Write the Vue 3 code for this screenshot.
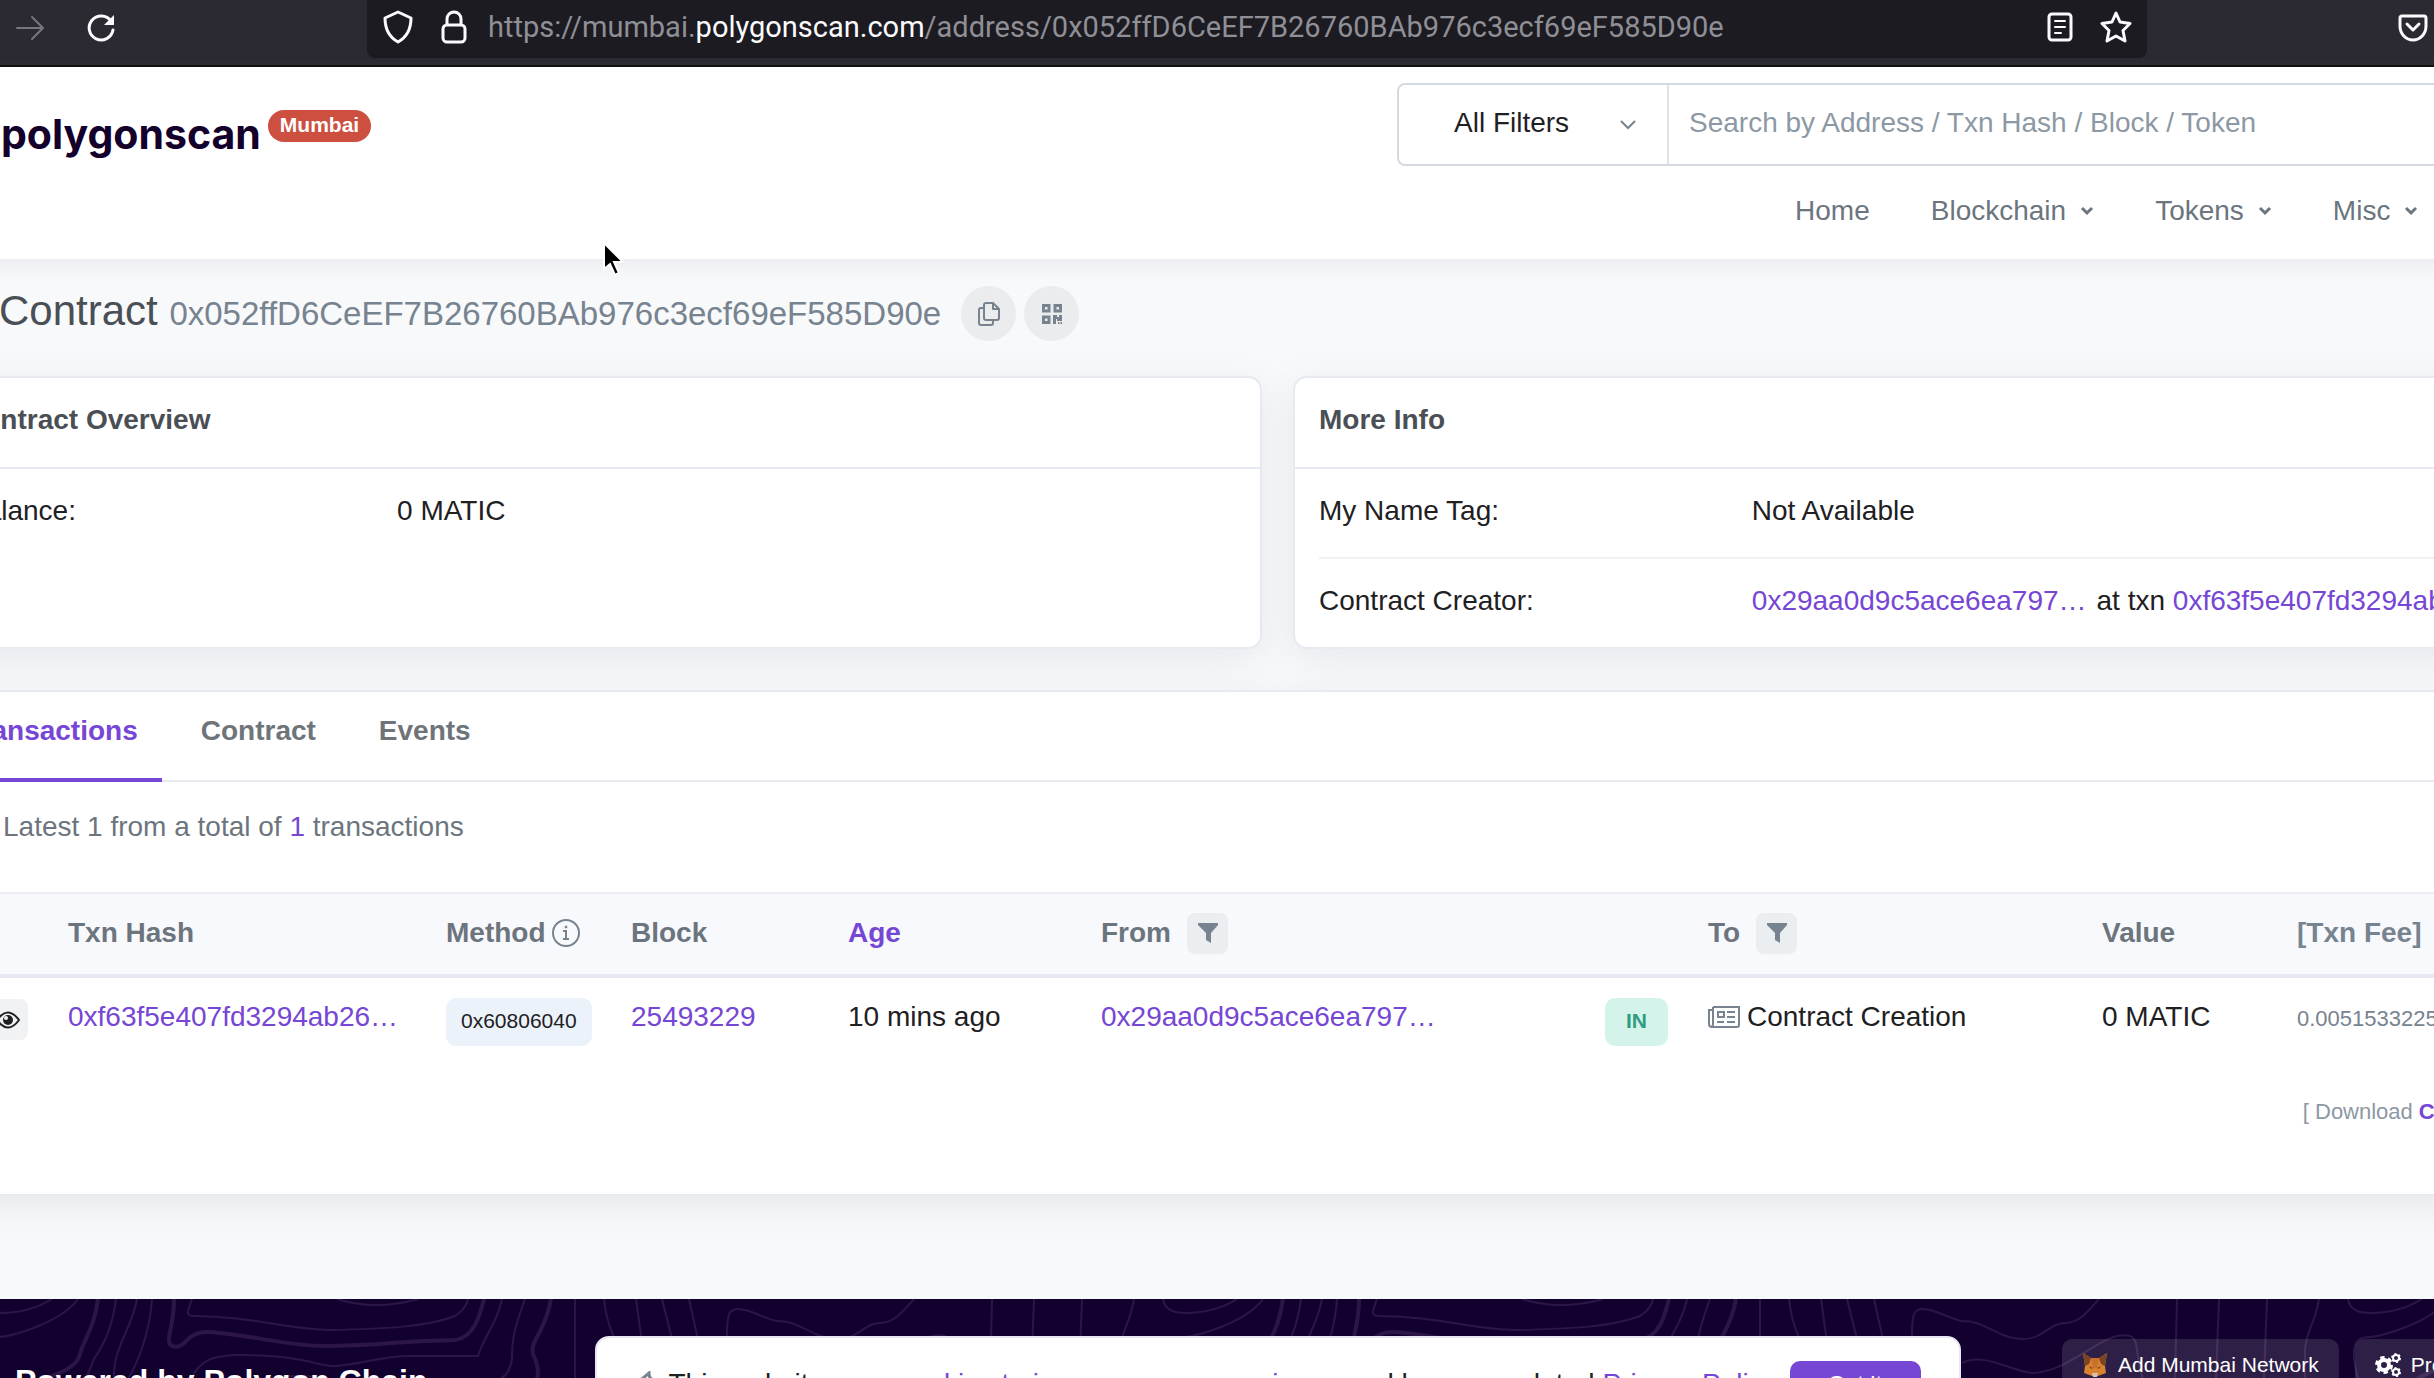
<script setup>
import { ref } from 'vue'

const menus = ['Blockchain', 'Tokens', 'Misc', 'Mumbai']
const tabs = ['Transactions', 'Contract', 'Events']
const activeTab = ref('Transactions')
const filter = ref('All Filters')
const query = ref('')
const address = '0x052ffD6CeEF7B26760BAb976c3ecf69eF585D90e'
const columnWidths = [89, 378, 185, 217, 253, 504, 103, 394, 195, 311]
</script>

<template>
  <div class="window">
    <div class="chrome">
      <div class="chrome-nav">
        <button class="icon-button" aria-label="Forward">
          <svg class="dim" width="30" height="28" viewBox="0 0 30 28" fill="none" stroke-width="2" stroke-linecap="round" stroke-linejoin="round"><path d="M1 14H27M16 3L27 14L16 25" /></svg>
        </button>
        <button class="icon-button" aria-label="Reload">
          <svg width="30" height="30" viewBox="0 0 30 30" fill="none" stroke-width="3" stroke-linecap="round"><path d="M25 8A12 12 0 1 0 27 17" /><path d="M28 2V12H18Z" fill="#fbfbfe" stroke="none" /></svg>
        </button>
      </div>
      <div class="url-bar">
        <svg width="30" height="34" viewBox="0 0 30 34" fill="none" stroke-width="3" stroke-linejoin="round"><path d="M15 2L28 8C28 20 24 27 15 32C6 27 2 20 2 8Z" /></svg>
        <svg class="lock" width="26" height="34" viewBox="0 0 26 34" fill="none" stroke-width="3"><rect x="2" y="15" width="22" height="17" rx="4" /><path d="M6 15V9A7 7 0 0 1 20 9V15" /></svg>
        <div class="url">https://mumbai.<span>polygonscan.com</span>/address/{{ address }}</div>
        <svg class="reader" width="26" height="30" viewBox="0 0 26 30" fill="none" stroke-width="3" stroke-linecap="round"><rect x="2" y="2" width="22" height="26" rx="3" /><path d="M8 9H18M8 15H18M8 21H14" stroke-width="2" /></svg>
        <svg width="34" height="32" viewBox="0 0 34 32" fill="none" stroke-width="3" stroke-linejoin="round"><path d="M17 2L21 11L31 12.500L24 19.500L26 30L17 25L8 30L10 19.500L3 12.500L13 11Z" /></svg>
      </div>
      <button class="icon-button pocket" aria-label="Save to Pocket">
        <svg width="30" height="28" viewBox="0 0 30 28" fill="none" stroke-width="3" stroke-linecap="round" stroke-linejoin="round"><path d="M4 2H26Q28 2 28 4V12C28 20 22 26 15 26C8 26 2 20 2 12V4Q2 2 4 2Z" /><path d="M9 10L15 16L21 10" /></svg>
      </button>
    </div>

    <div class="sheet">
      <header class="site-header">
        <a class="brand" href="#">polygonscan<span class="network">Mumbai</span></a>
        <div class="header-tools">
          <form class="search" @submit.prevent>
            <div class="filter">
              <select v-model="filter" aria-label="Filter">
                <option>All Filters</option>
                <option>Addresses</option>
                <option>Tokens</option>
              </select>
              <svg width="18" height="12" viewBox="0 0 18 12" fill="none" stroke="#77838f" stroke-width="2"><path d="M2 2L9 9L16 2" /></svg>
            </div>
            <input v-model="query" type="text" aria-label="Search" placeholder="Search by Address / Txn Hash / Block / Token">
          </form>
          <nav class="menu">
            <a href="#">Home</a>
            <button v-for="item in menus" :key="item">
              {{ item }}
              <svg v-if="item !== 'Mumbai'" width="14" height="10" viewBox="0 0 14 10" fill="none" stroke="#6c757d" stroke-width="3"><path d="M2 2L7 7L12 2" /></svg>
            </button>
          </nav>
        </div>
      </header>

      <main>
        <div class="title-row">
          <h1>Contract <small>{{ address }}</small></h1>
          <button class="round" aria-label="Copy address">
            <svg width="22" height="24" viewBox="0 0 22 24" fill="none" stroke="#77838f" stroke-width="2" stroke-linejoin="round"><path d="M8 1H15L21 7V16Q21 18 19 18H8Q6 18 6 16V3Q6 1 8 1Z" /><path d="M15 1V7H21M6 6H3Q1 6 1 8V21Q1 23 3 23H13Q15 23 15 21V18" /></svg>
          </button>
          <button class="round" aria-label="Show QR code">
            <svg width="22" height="22" viewBox="0 0 22 22" fill="none" stroke="#77838f" stroke-width="3"><path d="M2.500 2.500H8V8H2.500ZM14 2.500H19.500V8H14ZM2.500 14H8V19.500H2.500Z" /><path d="M12 12H16V14H18V12H21V18H16V16H15V21H12ZM17 19H18.500V21H17ZM19.500 19H21V21H19.500Z" fill="#77838f" stroke="none" /></svg>
          </button>
        </div>

        <div class="cards">
          <section class="card overview">
            <h2>Contract Overview</h2>
            <dl>
              <div class="info"><dt>Balance:</dt><dd>0 MATIC</dd></div>
            </dl>
          </section>
          <section class="card">
            <h2>More Info</h2>
            <dl>
              <div class="info"><dt>My Name Tag:</dt><dd>Not Available</dd></div>
              <div class="info">
                <dt>Contract Creator:</dt>
                <dd class="creator"><a href="#">0x29aa0d9c5ace6ea797…</a><span>at txn <a href="#">0xf63f5e407fd3294ab26…</a></span></dd>
              </div>
            </dl>
          </section>
        </div>

        <section class="card transactions">
          <div class="tabs" role="tablist">
            <button v-for="tab in tabs" :key="tab" role="tab" :aria-selected="tab === activeTab" :class="{ active: tab === activeTab }" @click="activeTab = tab">{{ tab }}</button>
          </div>
          <div class="panel">
            <p class="summary">Latest 1 from a total of <a href="#">1</a> transactions</p>
            <table>
              <colgroup><col v-for="(w, i) in columnWidths" :key="i" :style="{ width: w + 'px' }"></colgroup>
              <thead>
                <tr>
                  <th></th>
                  <th>Txn Hash</th>
                  <th><div class="head">Method <svg width="28" height="28" viewBox="0 0 28 28" fill="none" stroke="#77838f" stroke-width="2"><circle cx="14" cy="14" r="13" /><path d="M11 12H14V20M11 20H17" /><circle cx="14" cy="8" r="1" fill="#77838f" stroke-width="1" /></svg></div></th>
                  <th>Block</th>
                  <th><a href="#">Age</a></th>
                  <th><div class="head wide">From <button class="square" aria-label="Filter by sender"><svg width="22" height="22" viewBox="0 0 22 22" fill="#77838f"><path d="M1 1H21V3L14 11V21L9 18V11L1 3Z" /></svg></button></div></th>
                  <th></th>
                  <th><div class="head wide">To <button class="square" aria-label="Filter by recipient"><svg width="22" height="22" viewBox="0 0 22 22" fill="#77838f"><path d="M1 1H21V3L14 11V21L9 18V11L1 3Z" /></svg></button></div></th>
                  <th>Value</th>
                  <th class="muted">[Txn Fee]</th>
                </tr>
              </thead>
              <tbody>
                <tr>
                  <td class="preview"><button class="square" aria-label="Preview transaction"><svg width="24" height="18" viewBox="0 0 24 18" fill="none" stroke="#1e2022" stroke-width="2"><path d="M1 9Q12 -6 23 9Q12 24 1 9Z" /><circle cx="12" cy="9" r="5" fill="#1e2022" stroke="none" /><circle cx="10" cy="7" r="2" fill="#f1f2f3" stroke="none" /></svg></button></td>
                  <td><a href="#">0xf63f5e407fd3294ab26…</a></td>
                  <td class="tagged"><span class="tag">0x60806040</span></td>
                  <td><a href="#">25493229</a></td>
                  <td>10 mins ago</td>
                  <td><a href="#">0x29aa0d9c5ace6ea797…</a></td>
                  <td class="tagged"><span class="tag in">IN</span></td>
                  <td><div class="creation"><svg width="32" height="22" viewBox="0 0 32 22" fill="none" stroke="#77838f" stroke-width="2"><path d="M5 1H31V19Q31 21 29 21H4Q1 21 1 18V4H5M5 1V18Q5 21 3 21" /><path d="M10 6H16V11H10ZM19 6H27M19 11H27M9 16H16M19 16H27" /></svg>Contract Creation</div></td>
                  <td>0 MATIC</td>
                  <td class="fee">0.005153322500</td>
                </tr>
              </tbody>
            </table>
            <p class="download">[ Download <a href="#">CSV Export</a> <svg width="22" height="20" viewBox="0 0 22 20" fill="none" stroke="#8c98a4" stroke-width="2"><path d="M11 1V13M6 8L11 13L16 8M1 13V19H21V13" /></svg> ]</p>
          </div>
        </section>
      </main>

      <footer>
        <svg class="contours" width="100%" height="100%" aria-hidden="true">
          <pattern id="contour" x="63" width="1185" height="300" patternUnits="userSpaceOnUse">
            <g fill="none" stroke="#2b1647" stroke-width="2">
              <path d="M0 14Q30 14 52 0M1163 0C1165 12 1175 14 1185 14M0 38C10 37 60 25 78 0M116 0C112 30 104 45 94 60L86 80M137 0C132 30 112 50 114 80M152 0C150 30 140 60 128 80" />
              <path d="M192 0C188 12 184 17 195 17C250 17 290 31 330 31C390 30 430 27 455 17Q466 10 468 0M337 0Q375 12 418 0" />
              <path d="M191 80C200 60 215 57 235 56C300 55 320 68 335 67C360 66 380 57 410 57L478 57C485 35 497 25 502 0M262 80Q300 74 330 80" />
              <path d="M525 0C512 35 512 45 512 60Q510 75 500 80M575 0V80M604 0Q606 20 613 36L617 80M636 0L641 36V80M662 0L671 36L677 80M689 0L697 36L704 80" />
              <path d="M727 80V36C727 15 729 10 738 10C750 10 765 20 777 22C790 22 795 25 818 36Q840 44 854 36C865 30 870 24 880 24C895 24 905 10 914 0" />
              <path d="M777 64C800 52 830 75 850 74C890 70 920 30 945 37C955 40 950 60 958 80M992 0L990 80M1034 0L1031 80M1082 0L1079 80M1134 0C1130 25 1122 30 1120 50V80" />
              <path d="M1173 80C1165 50 1168 38 1185 38" />
            </g>
            <g fill="none" stroke="#2b1647" stroke-width="4">
              <path d="M98 0C94 30 84 40 80 55S60 72 47 80M551 0C545 35 530 40 533 55Q540 70 537 80" />
              <path d="M174 0C174 25 168 35 169 42C170 50 180 49 185 43C195 32 205 32 220 34C260 38 290 47 325 47C370 47 400 42 455 41C475 38 480 15 484 0" />
            </g>
          </pattern>
          <rect width="100%" height="100%" fill="url(#contour)" />
        </svg>
        <h3>Powered by Polygon Chain</h3>
        <div class="footer-actions">
          <button><svg width="26" height="26" viewBox="0 0 26 26"><path d="M1 1L9 6H17L25 1L23 14L24 21L16 24H10L2 21L3 14Z" fill="#d9822f" /><path d="M1 1L9 6L7 12L3 14ZM25 1L17 6L19 12L23 14Z" fill="#7a4522" /><path d="M9 6H17L15 16H11Z" fill="#c9712b" /><path d="M10 21H16L15 25H11Z" fill="#d9c5b5" /><path d="M7 14L11 16L9 17ZM19 14L15 16L17 17Z" fill="#7a4522" /></svg>Add Mumbai Network</button>
          <button><svg width="26" height="24" viewBox="0 0 26 24" fill="none" stroke="#fff"><circle cx="9" cy="12" r="5" stroke-width="4" /><circle cx="9" cy="12" r="7" stroke-width="4" stroke-dasharray="4 3.330" /><circle cx="21" cy="5" r="3" stroke-width="2" /><circle cx="21" cy="5" r="4" stroke-width="2" stroke-dasharray="2 2.189" /><circle cx="21" cy="19" r="3" stroke-width="2" /><circle cx="21" cy="19" r="4" stroke-width="2" stroke-dasharray="2 2.189" /></svg>Preferences</button>
        </div>
        <div class="cookie" role="dialog" aria-label="Cookies">
          <svg width="24" height="28" viewBox="0 0 24 28" fill="none" stroke="#77838f" stroke-width="3"><path d="M14 2Q14 9 20 9Q20 14 23 15Q22 26 12 26Q1 26 1 15Q2 9 7 8Z" /></svg>
          <p>This website uses <a href="#">cookies to improve your experience</a> and has an updated <a href="#">Privacy Policy</a>.</p>
          <button>Got It</button>
        </div>
      </footer>
    </div>

    <svg class="cursor" width="26" height="38" viewBox="0 0 26 38" aria-hidden="true"><path d="M3 3V29L9 24L14 35L18 33L13 22H22Z" fill="#000" stroke="#fff" stroke-width="2" /></svg>
  </div>
</template>

<style>
body {
  margin: 0;
  overflow: hidden;
}
</style>

<style scoped>
* {
  box-sizing: border-box;
}

.window {
  position: relative;
  height: 100vh;
  overflow: hidden;
  background: #f8f9fb;
  color: #1e2022;
  font: 28px/42px "Liberation Sans", Arial, sans-serif;
}

svg {
  display: block;
  flex: none;
}

a {
  color: #7646d4;
  text-decoration: none;
}

button {
  padding: 0;
  border: 0;
  background: none;
  color: inherit;
  font: inherit;
}

h1, h2, h3, p, dl, dd {
  margin: 0;
}

/* Browser toolbar */
.chrome {
  display: flex;
  align-items: flex-start;
  height: 67px;
  border-bottom: 2px solid #0c0c0d;
  background: #2b2a33;
}

.chrome svg {
  stroke: #fbfbfe;
}

.chrome .dim {
  stroke: #77767e;
}

.chrome-nav {
  display: flex;
  flex: 0 0 367px;
  gap: 40px;
  padding-left: 16px;
}

.icon-button {
  display: flex;
  align-items: center;
  height: 56px;
}

.url-bar {
  display: flex;
  flex: 1;
  align-items: center;
  height: 58px;
  padding: 0 14px 4px 16px;
  border-radius: 0 0 8px 8px;
  background: #1c1b22;
}

.lock {
  margin: 0 21px 0 28px;
}

.reader {
  margin-right: 26px;
}

.url {
  flex: 1;
  overflow: hidden;
  color: #8f8f96;
  font: 29px/40px Roboto, sans-serif;
  white-space: nowrap;
}

.url span {
  color: #fbfbfe;
}

.pocket {
  margin: 0 6px 0 251px;
}

/* The site is wider than the window and scrolled slightly to the right */
.sheet {
  width: calc(100% + 247px);
  margin-left: -63px;
}

.site-header {
  position: relative;
  display: flex;
  justify-content: space-between;
  padding: 16px 25px 27px 64px;
  background: #fff;
  box-shadow: 0 6px 18px rgba(140, 152, 164, 0.14);
}

.brand {
  display: flex;
  align-items: flex-start;
  gap: 7px;
  padding-top: 25px;
  color: #13002b;
  font: 700 41px/52px Inter, sans-serif;
}

.network {
  margin-top: 2px;
  padding: 0 12px 2px;
  border-radius: 16px;
  background: #cc4f3f;
  color: #fff;
  font: 700 21px/30px "Liberation Sans", Arial, sans-serif;
}

.header-tools {
  flex: 0 0 1196px;
}

.search {
  display: flex;
  height: 83px;
  border: 2px solid #d5dae2;
  border-radius: 8px;
}

.filter {
  position: relative;
  flex: 0 0 270px;
  border-right: 2px solid #dfe3e9;
}

.filter select {
  width: 100%;
  height: 100%;
  padding: 0 0 4px 55px;
  border: 0;
  appearance: none;
  background: none;
  color: #1e2022;
  font: inherit;
}

.filter svg {
  position: absolute;
  top: 34px;
  right: 30px;
}

.search input {
  flex: 1;
  padding: 0 20px 4px;
  border: 0;
  background: none;
  font: inherit;
}

.search input::placeholder {
  color: #8c98a4;
  opacity: 1;
}

.menu {
  display: flex;
  justify-content: flex-end;
  gap: 61px;
  padding: 24px 14px 0 0;
  color: #6c757d;
}

.menu a {
  color: inherit;
}

.menu button {
  display: flex;
  align-items: center;
  gap: 14px;
}

/* Page title */
.title-row {
  display: flex;
  align-items: center;
  gap: 8px;
  height: 55px;
  margin: 27px 0 35px;
  padding-left: 62px;
}

h1 {
  margin-right: 12px;
  padding-bottom: 3px;
  color: #4a4f55;
  font-size: 42px;
  font-weight: 400;
  line-height: 48px;
}

h1 small {
  color: #77838f;
  font-size: 33px;
}

.round {
  display: flex;
  align-items: center;
  justify-content: center;
  width: 55px;
  height: 55px;
  border-radius: 50%;
  background: #ebecee;
}

/* Cards */
.cards {
  display: grid;
  grid-template-columns: 1fr 1fr;
  gap: 31px;
}

.card {
  border: 2px solid #e7eaf0;
  border-radius: 14px;
  background: #fff;
  box-shadow: 0 10px 36px rgba(140, 152, 164, 0.16);
}

.card h2 {
  padding: 21px 24px 26px;
  border-bottom: 2px solid #e7eaf0;
  color: #4a4f55;
  font-size: 28px;
  line-height: 42px;
}

.card dl {
  padding: 0 24px;
}

.overview dl {
  padding: 0 28px;
}

.info {
  display: grid;
  grid-template-columns: 34% 1fr;
  padding: 21px 0 25px;
}

.info + .info {
  border-top: 2px solid #eff1f3;
}

.creator {
  display: flex;
  gap: 10px;
  white-space: nowrap;
}

.transactions {
  margin-top: 41px;
}

.tabs {
  display: flex;
  gap: 15px;
  padding-left: 2px;
  border-bottom: 2px solid #e7eaf0;
}

.tabs button {
  margin-bottom: -2px;
  padding: 18px 24px 26px;
  border-bottom: 4px solid transparent;
  color: #6f7479;
  font-weight: 700;
}

.tabs .active {
  border-color: #7646d4;
  color: #7646d4;
}

.panel {
  padding: 24px 24px 61px;
}

.summary {
  padding-left: 40px;
  color: #6c757d;
}

table {
  width: 100%;
  margin-top: 44px;
  border-collapse: separate;
  border-spacing: 0;
  table-layout: fixed;
}

th {
  height: 86px;
  padding: 18px 16px;
  border-top: 2px solid #eceef3;
  border-bottom: 4px solid #e7e8f1;
  background: #f8f9fd;
  color: #6c757d;
  text-align: left;
  vertical-align: top;
}

.muted {
  color: #77838f;
}

.head {
  display: flex;
  align-items: center;
  gap: 6px;
}

.head.wide {
  gap: 16px;
}

.square {
  display: flex;
  align-items: center;
  justify-content: center;
  width: 41px;
  height: 41px;
  border-radius: 8px;
  background: #ebeef1;
}

td {
  padding: 18px 16px 17px;
  vertical-align: top;
  white-space: nowrap;
}

.preview {
  padding: 21px 0 0 24px;
}

.preview .square {
  background: #f1f2f3;
}

.tagged {
  padding-top: 20px;
}

.tag {
  display: inline-block;
  padding: 0 15px 2px;
  border-radius: 10px;
  background: #ebf2fa;
  font-size: 21px;
  line-height: 46px;
}

.in {
  padding: 0 21px 2px;
  background: #d4f4eb;
  color: #2f9b7f;
  font-weight: 700;
}

.creation {
  display: flex;
  align-items: center;
  gap: 7px;
}

td.fee {
  padding-top: 20px;
  color: #77838f;
  font-size: 22px;
}

.download {
  display: flex;
  align-items: center;
  justify-content: flex-end;
  gap: 6px;
  margin-top: 28px;
  padding-right: 12px;
  color: #8c98a4;
  font-size: 22px;
}

.download a {
  font-weight: 700;
}

/* Footer */
footer {
  position: relative;
  display: flex;
  align-items: flex-start;
  justify-content: space-between;
  height: 300px;
  margin-top: 103px;
  padding: 40px 25px 0 78px;
  background: #12002e;
  color: #fff;
}

.contours {
  position: absolute;
  inset: 0;
}

h3 {
  position: relative;
  padding-top: 21px;
  font-size: 32px;
}

.footer-actions {
  position: relative;
  display: flex;
  gap: 16px;
  flex: 0 0 531px;
}

.footer-actions button {
  display: flex;
  align-items: center;
  gap: 10px;
  padding: 5px 20px 9px;
  border-radius: 10px;
  background: rgba(255, 255, 255, 0.12);
  font-size: 21px;
}

.cookie {
  position: absolute;
  top: 37px;
  left: 50%;
  display: flex;
  align-items: flex-start;
  width: 1366px;
  padding: 23px 38px;
  border: 2px solid #e7e8f4;
  border-radius: 14px;
  transform: translateX(-50%);
  background: #fff;
  color: #1e2022;
}

.cookie svg {
  margin: 10px 10px 0 0;
}

.cookie p {
  flex: 1;
  padding-top: 2px;
}

.cookie button {
  width: 131px;
  padding: 2px 0 4px;
  border-radius: 10px;
  background: #7646d4;
  color: #fff;
  font-size: 22px;
}

.cursor {
  position: absolute;
  top: 240px;
  left: 601px;
}
</style>
